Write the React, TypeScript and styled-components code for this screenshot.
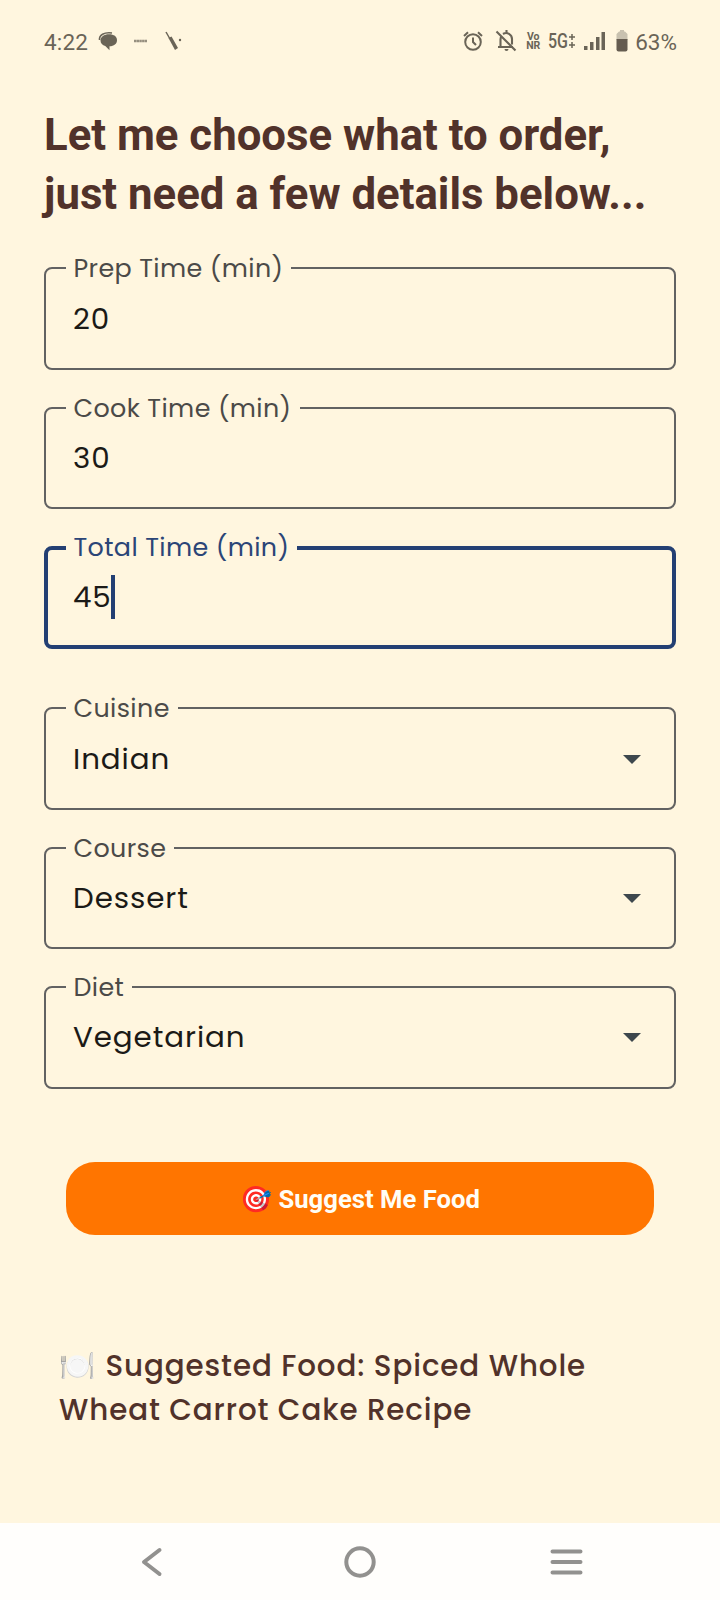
import React from "react";
import styled, { createGlobalStyle } from "styled-components";

const GlobalStyle = createGlobalStyle`
  * { box-sizing: border-box; }
  body { margin: 0; background: #fff6df; }
`;

const geometric = `Poppins, Inter, "Open Sans", sans-serif`;

const Screen = styled.div`
  width: 720px;
  height: 1600px;
  display: flex;
  flex-direction: column;
  background: #fff6df;
  font-family: Roboto, sans-serif;
  overflow: hidden;
`;

const StatusBar = styled.header`
  display: flex;
  align-items: center;
  height: 82px;
  padding: 0 43px 0 44px;
  color: #6a6457;
`;

const StatusText = styled.span<{ $tracking?: number }>`
  font-size: 22.5px;
  line-height: 28px;
  padding-top: 2px;
  letter-spacing: ${(p) => p.$tracking ?? 0}px;
  font-weight: 400;
`;

const StatusLeft = styled.div`
  display: flex;
  align-items: center;
  flex: 1;
`;

const StatusRight = styled.div`
  display: flex;
  align-items: center;
`;

const Glyph = styled.svg<{ $left?: number }>`
  display: block;
  flex: none;
  margin-left: ${(p) => p.$left ?? 0}px;
`;

const VoNr = styled.span`
  margin-left: 8px;
  width: 16px;
  text-align: center;
  font-size: 10.5px;
  font-weight: 700;
  line-height: 9.3px;
`;

const Network = styled.span`
  display: flex;
  align-items: center;
  margin-left: 7px;
`;

const Generation = styled.span`
  width: 20px;
  font-size: 20px;
  line-height: 24px;
  font-weight: 500;
  transform: scaleX(0.8);
  transform-origin: left center;
`;

const Main = styled.main`
  flex: 1;
  display: flex;
  flex-direction: column;
  padding: 24px 44px 0;
`;

const Title = styled.h1`
  margin: 0 0 44.2px;
  font-size: 43.75px;
  line-height: 58.6px;
  font-weight: 700;
  color: #51322a;
  white-space: nowrap;
`;

const Fields = styled.div<{ $after: number }>`
  display: flex;
  flex-direction: column;
  gap: 36.9px;
  margin-bottom: ${(p) => p.$after}px;
`;

const FieldBox = styled.div<{ $focused?: boolean }>`
  position: relative;
  display: flex;
  align-items: center;
  justify-content: space-between;
  height: 102.5px;
  padding: 0 ${(p) => (p.$focused ? 31 : 33)}px 0 ${(p) => (p.$focused ? 25 : 27)}px;
  border: ${(p) => (p.$focused ? "4px solid #233f73" : "2px solid #626262")};
  border-radius: 8px;
`;

const Label = styled.label<{ $focused?: boolean }>`
  position: absolute;
  top: ${(p) => (p.$focused ? -19 : -17)}px;
  left: ${(p) => (p.$focused ? 18 : 20)}px;
  padding: 0 8px 0 7.5px;
  background: #fff6df;
  font-family: ${geometric};
  font-size: 25.4px;
  line-height: 32px;
  letter-spacing: 0.38px;
  color: ${(p) => (p.$focused ? "#2b4577" : "#4b4a48")};
  white-space: nowrap;
`;

const Value = styled.span`
  font-family: ${geometric};
  font-size: 29.33px;
  line-height: 40px;
  letter-spacing: 0.92px;
  color: #1b1a17;
`;

const Entry = styled.div`
  display: flex;
  align-items: center;
`;

const Caret = styled.span`
  width: 4px;
  height: 44px;
  margin-left: -1px;
  background: #233f73;
`;

const SuggestButton = styled.button`
  display: flex;
  align-items: center;
  justify-content: center;
  height: 73px;
  margin: 0 22px;
  padding: 2px 0 0;
  border: 0;
  border-radius: 29px;
  background: #ff7500;
  color: #fffdf5;
  font: 700 25.67px/34px Roboto, sans-serif;
`;

const Result = styled.p`
  margin: 109px 15px 0;
  font-family: ${geometric};
  font-weight: 500;
  font-size: 29.33px;
  line-height: 44px;
  letter-spacing: 0.9px;
  color: #51322a;
`;

const NavBar = styled.nav`
  display: flex;
  align-items: center;
  justify-content: space-between;
  height: 77px;
  padding: 0 137px 0 141px;
  background: #fffefc;
`;

type Field = { label: string; value: string; focused?: boolean; select?: boolean };

const timeFields: Field[] = [
  { label: "Prep Time (min)", value: "20" },
  { label: "Cook Time (min)", value: "30" },
  { label: "Total Time (min)", value: "45", focused: true },
];

const menuFields: Field[] = [
  { label: "Cuisine", value: "Indian", select: true },
  { label: "Course", value: "Dessert", select: true },
  { label: "Diet", value: "Vegetarian", select: true },
];

function OutlinedField({ label, value, focused, select }: Field) {
  return (
    <FieldBox $focused={focused}>
      <Label $focused={focused}>{label}</Label>
      <Entry>
        <Value>{value}</Value>
        {focused && <Caret />}
      </Entry>
      {select && (
        <Glyph width="18" height="10" viewBox="0 0 18 10">
          <path d="M0 1h18L9 10z" fill="#3d474d" />
        </Glyph>
      )}
    </FieldBox>
  );
}

export default function App() {
  return (
    <Screen>
      <GlobalStyle />
      <StatusBar>
        <StatusLeft>
          <StatusText $tracking={0.2}>4:22</StatusText>
          <Glyph $left={10} width="20" height="20" viewBox="0 0 20 20">
            <path d="M1.500 9C1 4 6 1 14 2" fill="none" stroke="currentColor" strokeWidth="1.600" />
            <path d="M11 3.300c5 0 8 2.200 8 5.900s-3 5.800-7.500 6.100v4l-4.200-4.200C4.500 14.300 2.500 12.200 2.500 9.500c0-3.500 3.500-6.200 8.500-6.200z" fill="currentColor" />
          </Glyph>
          <Glyph $left={16} width="14" height="4" viewBox="0 0 14 4">
            <path d="M0 2h13" stroke="currentColor" strokeWidth="2.600" strokeDasharray="2.400 .3" opacity=".7" />
          </Glyph>
          <Glyph $left={17} width="18" height="20" viewBox="0 0 18 20">
            <path d="M1 1l4 7" stroke="currentColor" strokeWidth="1.500" />
            <path d="M3.500 7l3-1.500L13 17 10 19z" fill="currentColor" />
            <circle cx="15" cy="9" r="1.200" fill="currentColor" />
          </Glyph>
        </StatusLeft>
        <StatusRight>
          <Glyph width="20" height="20" viewBox="0 0 20 20" fill="none" stroke="currentColor" strokeWidth="2">
            <circle cx="10" cy="11" r="7.800" />
            <path d="M10 6.500V11l3 3M1 5l4-3.700M19 5l-4-3.700" />
          </Glyph>
          <Glyph $left={12} width="22" height="22" viewBox="0 0 22 22" fill="none" stroke="currentColor" strokeWidth="2.100">
            <path d="M1.500 1.500l19 19M3 17h15M5.500 16.500V9.500c0-1.500.4-2.500 1-3.500M8 4c4-2.500 9 .5 9 5v5.500M11.500 0V3" />
            <path d="M9.500 19h4a2 2 0 0 1-4 0z" fill="currentColor" stroke="none" />
          </Glyph>
          <VoNr>Vo NR</VoNr>
          <Network>
            <Generation>5G</Generation>
            <Glyph width="8" height="18" viewBox="0 0 8 18" stroke="currentColor" strokeWidth="1.500">
              <path d="M1 5h6M4 2v6M1 13h6M4 10v6" />
            </Glyph>
          </Network>
          <Glyph $left={8} width="22" height="20" viewBox="0 0 22 20" fill="currentColor">
            <path d="M0 15h3.500v4H0zM6 11h3.500v8H6zM12 6h3.500v13H12zM17.500 1H21v18h-3.500z" />
          </Glyph>
          <Glyph $left={10} width="12" height="22" viewBox="0 0 12 22">
            <path d="M3 1.500h1V0h4v1.500h1l2.500 2.500v6H.5V4z" fill="#c8c1af" />
            <path d="M.5 9h11v10.500a2 2 0 0 1-2 2h-7a2 2 0 0 1-2-2z" fill="#655c50" />
          </Glyph>
          <Glyph width="7" height="1" />
          <StatusText>63%</StatusText>
        </StatusRight>
      </StatusBar>
      <Main>
        <Title>
          Let me choose what to order,
          <br />
          just need a few details below...
        </Title>
        <Fields $after={58.6}>{timeFields.map((f) => <OutlinedField key={f.label} {...f} />)}</Fields>
        <Fields $after={73.2}>{menuFields.map((f) => <OutlinedField key={f.label} {...f} />)}</Fields>
        <SuggestButton>🎯 Suggest Me Food</SuggestButton>
        <Result>🍽️ Suggested Food: Spiced Whole Wheat Carrot Cake Recipe</Result>
      </Main>
      <NavBar>
        <Glyph width="22" height="30" viewBox="0 0 22 30" fill="none" stroke="#92918f" strokeWidth="4" strokeLinecap="round" strokeLinejoin="round">
          <path d="M18.500 3L3 15l15.500 12" />
        </Glyph>
        <Glyph $left={7} width="32" height="32" viewBox="0 0 32 32" fill="none" stroke="#92918f" strokeWidth="4">
          <circle cx="16" cy="16" r="13.700" />
        </Glyph>
        <Glyph width="33" height="26" viewBox="0 0 33 26" stroke="#92918f" strokeWidth="4" strokeLinecap="round">
          <path d="M2.500 2.500h28M2.500 13h28M2.500 23.500h28" />
        </Glyph>
      </NavBar>
    </Screen>
  );
}
